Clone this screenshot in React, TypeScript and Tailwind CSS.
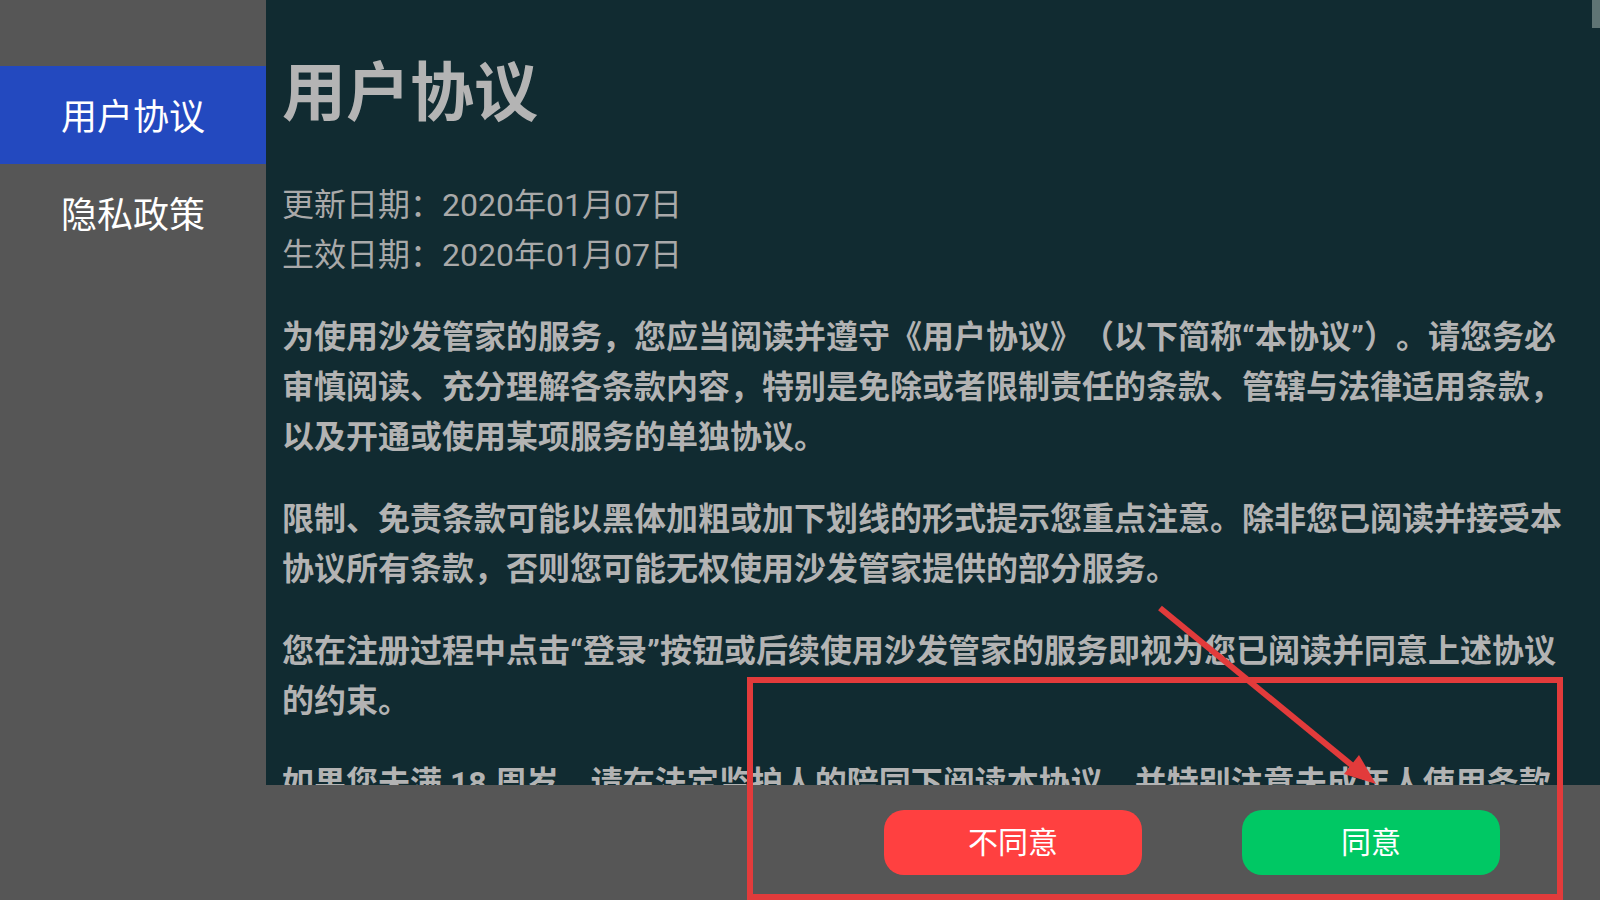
import React from "react";

const font = { fontFamily: "Roboto, 'Noto Sans CJK SC', sans-serif" };

export default function App() {
  return (
    <div
      className="relative w-[1600px] h-[900px] overflow-hidden bg-[#565656] flex flex-col [text-spacing-trim:space-all]"
      style={font}
    >
      <div className="flex h-[785px] shrink-0">
        <aside className="w-[266px] shrink-0 bg-[#565656] pt-[66px]">
          <div className="h-[98px] pt-[6px] bg-[#2349bf] flex items-center justify-center text-white text-[36px] leading-none">
            用户协议
          </div>
          <div className="h-[98px] pt-[6px] flex items-center justify-center text-white text-[36px] leading-none">
            隐私政策
          </div>
        </aside>
        <main className="relative flex-1 bg-[#112b31] overflow-hidden pl-[16px] pt-[54px]">
          <div className="absolute top-0 right-0 w-[8px] h-[28px] bg-[#5f7474]" />
          <div className="w-[1302px]">
            <h1 className="text-[64px] leading-[80px] font-bold text-[#b4b4b4]">用户协议</h1>
            <div className="mt-[46px] text-[32px] leading-[50px] text-[#a9a9a9]">
              <p>更新日期：2020年01月07日</p>
              <p>生效日期：2020年01月07日</p>
            </div>
            <div className="text-[32px] leading-[50px] font-bold text-[#b3b3b3]">
              <p className="mt-[32px]">
                为使用沙发管家的服务，您应当阅读并遵守《用户协议》（以下简称“本协议”）。请您务必审慎阅读、充分理解各条款内容，特别是免除或者限制责任的条款、管辖与法律适用条款，以及开通或使用某项服务的单独协议。
              </p>
              <p className="mt-[32px]">
                限制、免责条款可能以黑体加粗或加下划线的形式提示您重点注意。除非您已阅读并接受本协议所有条款，否则您可能无权使用沙发管家提供的部分服务。
              </p>
              <p className="mt-[32px]">
                您在注册过程中点击“登录”按钮或后续使用沙发管家的服务即视为您已阅读并同意上述协议的约束。
              </p>
              <p className="mt-[32px]">
                如果您未满 18 周岁，请在法定监护人的陪同下阅读本协议，并特别注意未成年人使用条款。
              </p>
            </div>
          </div>
        </main>
      </div>
      <div className="flex-1 flex items-center pl-[884px] gap-[100px]">
        <button className="w-[258px] h-[65px] rounded-[20px] bg-[#ff4040] text-white text-[30px] leading-none">
          不同意
        </button>
        <button className="w-[258px] h-[65px] rounded-[20px] bg-[#00c864] text-white text-[30px] leading-none">
          同意
        </button>
      </div>

      {/* annotation overlay */}
      <div className="absolute left-[747px] top-[677px] w-[816px] h-[223px] border-[6px] border-[#e23b3b] pointer-events-none" />
      <svg
        className="absolute left-0 top-0 pointer-events-none"
        width="1600"
        height="900"
        viewBox="0 0 1600 900"
      >
        <line x1="1160" y1="608" x2="1354" y2="767" stroke="#e23b3b" strokeWidth="6" />
        <polygon points="1376,784 1344,774 1359,755" fill="#e23b3b" />
      </svg>
    </div>
  );
}
